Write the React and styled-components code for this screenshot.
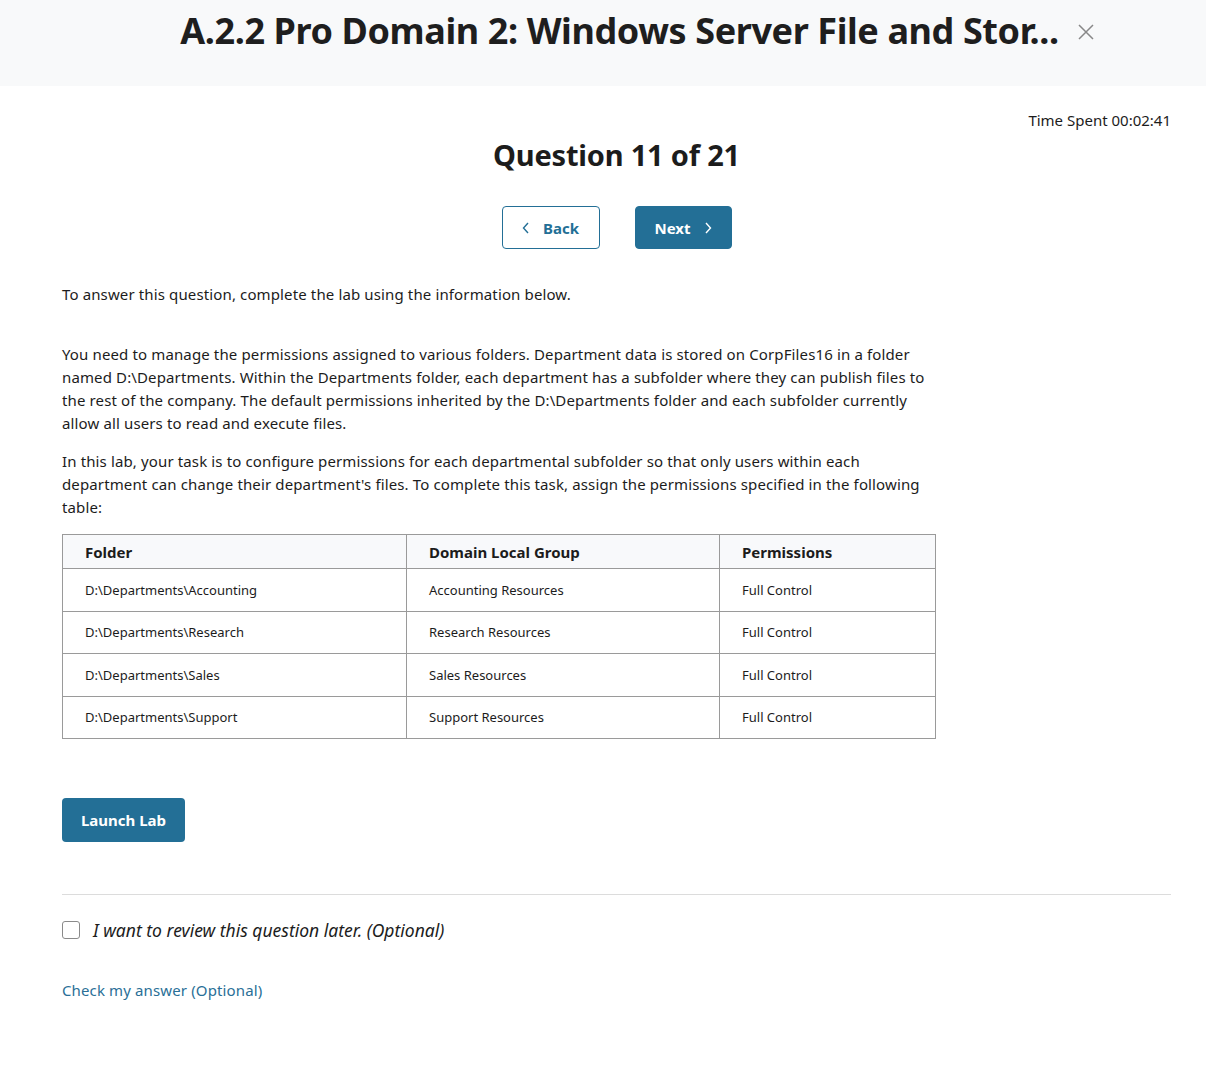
import React, { useState } from 'react'
import styled, { createGlobalStyle } from 'styled-components'

const Global = createGlobalStyle`
  body {
    margin: 0;
    background: #ffffff;
    font-family: "Noto Sans", "Open Sans", sans-serif;
    color: #1c1c1c;
  }
`

const Header = styled.header`
  height: 86px;
  background: #f8f9fa;
  display: flex;
  align-items: flex-start;
  justify-content: center;
  gap: 18px;
  padding: 8px 0 0 69px;
  box-sizing: border-box;
`

const Title = styled.h1`
  margin: 0;
  font-size: 36px;
  font-weight: 700;
  letter-spacing: -0.4px;
  line-height: 46px;
  color: #1e1e1e;
`

const Close = styled.button`
  border: 0;
  background: none;
  padding: 0;
  margin-top: 15px;
  width: 18px;
  height: 18px;
  cursor: pointer;
  color: #888;
`

const Main = styled.main`
  padding: 23px 35px 60px 62px;
`

const TopRow = styled.div`
  display: flex;
  justify-content: flex-end;
  font-size: 15px;
  line-height: 22px;
`

const Question = styled.h2`
  margin: 4px 0 0;
  text-align: center;
  font-size: 29px;
  font-weight: 700;
  line-height: 40px;
  letter-spacing: -0.2px;
`

const NavRow = styled.div`
  display: flex;
  justify-content: center;
  gap: 35px;
  margin-top: 31px;
`

const NavButton = styled.button`
  display: flex;
  align-items: center;
  justify-content: center;
  gap: 13px;
  height: 43px;
  width: ${p => p.$w}px;
  border-radius: 4px;
  font-family: inherit;
  font-size: 15px;
  font-weight: 700;
  border: 1px solid #236f96;
  background: ${p => (p.$primary ? '#236f96' : '#fff')};
  color: ${p => (p.$primary ? '#fff' : '#236f96')};
  cursor: pointer;
`

const Text = styled.p`
  margin: ${p => p.$mt || 0}px 0 0;
  max-width: 872px;
  font-size: 15px;
  line-height: 23px;
  letter-spacing: 0.13px;
`

const Table = styled.table`
  margin-top: 15px;
  width: 873px;
  border-collapse: collapse;
  table-layout: fixed;
`

const Th = styled.th`
  text-align: left;
  background: #f8f9fb;
  border: 1px solid #9a9a9a;
  height: 34px;
  padding: 0 22px;
  font-size: 15px;
  line-height: 20px;
  font-weight: 700;
  box-sizing: border-box;
`

const Td = styled.td`
  border: 1px solid #9a9a9a;
  height: 42.5px;
  padding: 0 22px;
  font-size: 13px;
  line-height: 18px;
  box-sizing: border-box;
`

const LaunchButton = styled.button`
  margin-top: 59px;
  height: 44px;
  width: 123px;
  border: 0;
  border-radius: 4px;
  background: #236f96;
  color: #fff;
  font-family: inherit;
  font-size: 15px;
  font-weight: 700;
  cursor: pointer;
`

const Divider = styled.hr`
  margin: 52px 0 0;
  border: 0;
  border-top: 1px solid #dcdcdc;
`

const Review = styled.label`
  display: flex;
  align-items: center;
  gap: 13px;
  margin-top: 23px;
  font-size: 17.5px;
  font-style: italic;
  cursor: pointer;
`

const Box = styled.span`
  width: 16px;
  height: 16px;
  border: 1px solid #8a8a8a;
  border-radius: 3px;
  background: ${p => (p.$on ? '#236f96' : '#fff')};
`

const CheckLink = styled.a`
  display: inline-block;
  margin-top: 38px;
  font-size: 15px;
  letter-spacing: 0.13px;
  color: #2a6f97;
  text-decoration: none;
`

const rows = [
  ['D:\\Departments\\Accounting', 'Accounting Resources', 'Full Control'],
  ['D:\\Departments\\Research', 'Research Resources', 'Full Control'],
  ['D:\\Departments\\Sales', 'Sales Resources', 'Full Control'],
  ['D:\\Departments\\Support', 'Support Resources', 'Full Control'],
]

const Chevron = ({ dir }) => (
  <svg width="8" height="12" viewBox="0 0 8 12" fill="none" stroke="currentColor" strokeWidth="1.4">
    {dir === 'left' ? <path d="M6 1 1.5 6 6 11" /> : <path d="M2 1 6.5 6 2 11" />}
  </svg>
)

export default function App() {
  const [review, setReview] = useState(false)

  return (
    <>
      <Global />
      <Header>
        <Title>A.2.2 Pro Domain 2: Windows Server File and Stor...</Title>
        <Close aria-label="Close">
          <svg width="18" height="18" viewBox="0 0 18 18" stroke="currentColor" strokeWidth="1.5">
            <path d="M2 2l14 14M16 2 2 16" />
          </svg>
        </Close>
      </Header>
      <Main>
        <TopRow>Time Spent 00:02:41</TopRow>
        <Question>Question 11 of 21</Question>
        <NavRow>
          <NavButton $w={98}><Chevron dir="left" />Back</NavButton>
          <NavButton $w={97} $primary>Next<Chevron dir="right" /></NavButton>
        </NavRow>

        <Text $mt={34}>To answer this question, complete the lab using the information below.</Text>
        <Text $mt={37}>
          You need to manage the permissions assigned to various folders. Department data is stored on CorpFiles16 in a folder
          named D:\Departments. Within the Departments folder, each department has a subfolder where they can publish files to
          the rest of the company. The default permissions inherited by the D:\Departments folder and each subfolder currently
          allow all users to read and execute files.
        </Text>
        <Text $mt={15}>
          In this lab, your task is to configure permissions for each departmental subfolder so that only users within each
          department can change their department's files. To complete this task, assign the permissions specified in the following
          table:
        </Text>

        <Table>
          <colgroup>
            <col style={{ width: 344 }} />
            <col style={{ width: 313 }} />
            <col style={{ width: 216 }} />
          </colgroup>
          <thead>
            <tr>
              <Th>Folder</Th>
              <Th>Domain Local Group</Th>
              <Th>Permissions</Th>
            </tr>
          </thead>
          <tbody>
            {rows.map(r => (
              <tr key={r[0]}>
                {r.map((c, i) => <Td key={i}>{c}</Td>)}
              </tr>
            ))}
          </tbody>
        </Table>

        <LaunchButton>Launch Lab</LaunchButton>
        <Divider />
        <Review onClick={() => setReview(!review)}>
          <Box $on={review} />
          I want to review this question later. (Optional)
        </Review>
        <CheckLink href="#">Check my answer (Optional)</CheckLink>
      </Main>
    </>
  )
}
